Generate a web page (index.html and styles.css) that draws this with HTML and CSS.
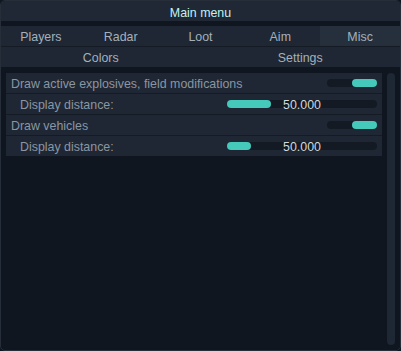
FILE: index.html
```html
<!DOCTYPE html>
<html>
<head>
    <title>Main menu</title>
    <link rel="stylesheet" href="styles.css">
</head>
<body>
    <div class="window">
        <div class="title">Main menu</div>

        <!-- Tabs -->
        <div class="tabs">
            <div class="tab">Players</div>
            <div class="tab">Radar</div>
            <div class="tab">Loot</div>
            <div class="tab">Aim</div>
            <div class="tab active">Misc</div>
        </div>
        <div class="subtabs">
            <div class="tab">Colors</div>
            <div class="tab">Settings</div>
        </div>

        <!-- Settings list -->
        <div class="content">
            <div class="panel">
                <div class="row">
                    <span class="label">Draw active explosives, field modifications</span>
                    <div class="toggle on"><div class="knob"></div></div>
                </div>
                <div class="row sub">
                    <span class="label">Display distance:</span>
                    <div class="slider">
                        <div class="track"><div class="fill" style="width: 44px"></div></div>
                        <span class="value">50.000</span>
                    </div>
                </div>
                <div class="row">
                    <span class="label">Draw vehicles</span>
                    <div class="toggle on"><div class="knob"></div></div>
                </div>
                <div class="row sub">
                    <span class="label">Display distance:</span>
                    <div class="slider">
                        <div class="track"><div class="fill" style="width: 24px"></div></div>
                        <span class="value">50.000</span>
                    </div>
                </div>
            </div>
            <div class="scrollbar"></div>
        </div>
    </div>
</body>
</html>
```

FILE: styles.css
```css
body {
    margin: 0;
    font-family: "Liberation Sans", Arial, sans-serif;
    font-size: 12.4px;
    background-color: #0f1620;
}
.window {
    width: 401px;
    height: 351px;
    box-sizing: border-box;
    border: 1px solid #252e39;
    border-radius: 5px;
    background-color: #0f1620;
    overflow: hidden;
}
.title {
    height: 20px;
    box-sizing: border-box;
    padding-top: 2px;
    line-height: 20px;
    text-align: center;
    color: #c2f1f1;
    background-color: #1f2834;
    margin-bottom: 5px;
}
.tabs {
    display: grid;
    grid-template-columns: repeat(5, 1fr);
    background-color: #1e2733;
    border-bottom: 1px solid #141b24;
}
.subtabs {
    display: grid;
    grid-template-columns: 1fr 1fr;
    background-color: #1e2733;
}
.tab {
    height: 20px;
    line-height: 22px;
    text-align: center;
    color: #a5b0bb;
}
.tab.active {
    background-color: #26303d;
}
.content {
    display: flex;
    gap: 5px;
    padding: 6px 5px 0 5px;
}
.panel {
    width: 377px;
    display: flex;
    flex-direction: column;
    gap: 1px;
    align-self: flex-start;
    background-color: #141b24;
}
.row {
    height: 20px;
    display: flex;
    align-items: center;
    justify-content: space-between;
    padding: 0 5px 0 5px;
    background-color: #1e2733;
    color: #8a96a3;
}
.row.sub {
    padding-left: 14px;
}
.label,
.value {
    padding-top: 2px;
}
.toggle {
    width: 50px;
    height: 8px;
    border-radius: 4px;
    background-color: #131a23;
    display: flex;
}
.toggle.on {
    justify-content: flex-end;
}
.knob {
    width: 25px;
    height: 8px;
    border-radius: 4px;
    background-color: #44c9ba;
}
.slider {
    width: 150px;
    display: grid;
    align-items: center;
    justify-items: center;
}
.slider > * {
    grid-area: 1 / 1;
}
.track {
    width: 150px;
    height: 8px;
    border-radius: 4px;
    background-color: #131a23;
}
.fill {
    height: 8px;
    border-radius: 4px;
    background-color: #44c9ba;
}
.value {
    color: #d3d8de;
}
.scrollbar {
    width: 8px;
    height: 272px;
    border-radius: 4px;
    background-color: #1e2834;
}
```
